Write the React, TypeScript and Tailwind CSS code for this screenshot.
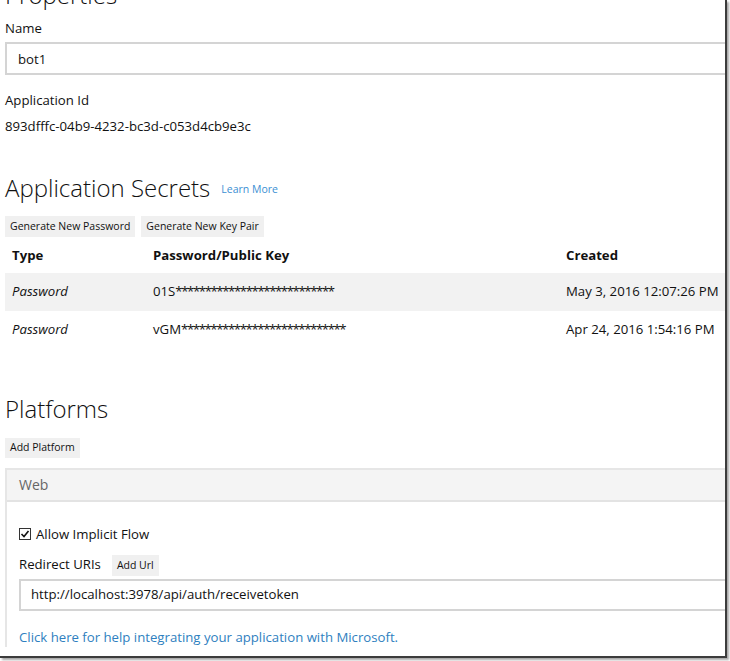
import React from "react";

const font = { fontFamily: '"Open Sans", "Noto Sans", sans-serif' };

function Check() {
  return (
    <span className="inline-flex h-[12px] w-[12px] items-center justify-center border border-[#333] bg-white">
      <svg width="10" height="10" viewBox="0 0 10 10">
        <path d="M1.5 5 L4 7.5 L8.5 2" fill="none" stroke="#111" strokeWidth="1.6" />
      </svg>
    </span>
  );
}

const rows = [
  { prefix: "01S", stars: 27, created: "May 3, 2016 12:07:26 PM", shaded: true },
  { prefix: "vGM", stars: 28, created: "Apr 24, 2016 1:54:16 PM", shaded: false },
];

export default function App() {
  return (
    <div className="relative h-[661px] w-[730px] overflow-hidden bg-white" style={font}>
      <div className="h-[658px] w-[727px] overflow-hidden border-r-2 border-b-2 border-[#3c3c3c] bg-white text-[13.2px] text-[#111] shadow-[2px_2px_2px_rgba(0,0,0,0.35)]">
        <h1 className="mt-[-20px] pl-[5px] text-[24px] font-light leading-[30px]">Properties</h1>

        <div className="mt-[8px] pl-[5px] leading-[20px]">Name</div>
        <div className="mt-[4px] ml-[5px] flex h-[33px] items-center border-2 border-r-0 border-[#d4d4d4] pl-[11px] pt-[2px]">bot1</div>

        <div className="mt-[15px] pl-[5px] leading-[20px]">Application Id</div>
        <div className="mt-[6px] pl-[5px] leading-[20px]">893dfffc-04b9-4232-bc3d-c053d4cb9e3c</div>

        <div className="mt-[35px] flex items-center gap-[11px] pl-[5px]">
          <h2 className="text-[24px] font-light leading-[34px]">Application Secrets</h2>
          <a className="pt-[3px] text-[10.5px] text-[#3b8fd3]">Learn More</a>
        </div>

        <div className="mt-[11px] flex gap-[6px] pl-[5px] text-[10.5px]">
          <button className="h-[21px] bg-[#f0f0f0] px-[5px]">Generate New Password</button>
          <button className="h-[21px] bg-[#f0f0f0] px-[5px]">Generate New Key Pair</button>
        </div>

        <div className="mt-[2px] ml-[5px]">
          <div className="grid h-[34px] grid-cols-[141px_413px_1fr] items-center pl-[7px] font-bold">
            <span>Type</span>
            <span>Password/Public Key</span>
            <span>Created</span>
          </div>
          {rows.map((r) => (
            <div
              key={r.prefix}
              className={`grid h-[38px] grid-cols-[141px_413px_1fr] items-center whitespace-nowrap pl-[7px] ${r.shaded ? "bg-[#f2f2f2]" : ""}`}
            >
              <span className="italic">Password</span>
              <span>
                {r.prefix}
                <span className="tracking-[-1.4px]">{"*".repeat(r.stars)}</span>
              </span>
              <span>{r.created}</span>
            </div>
          ))}
        </div>

        <h2 className="mt-[43px] pl-[5px] text-[24px] font-light leading-[34px]">Platforms</h2>

        <div className="mt-[11px] pl-[5px]">
          <button className="h-[20px] bg-[#f0f0f0] px-[5px] text-[10.5px]">Add Platform</button>
        </div>

        <div className="mt-[10px] ml-[5px] border-l-2 border-t-2 border-[#e6e6e6]">
          <div className="flex h-[32px] items-center border-b-2 border-[#e3e3e3] bg-[#f4f4f4] pl-[12px] text-[14px] text-[#666]">
            Web
          </div>
          <div className="pl-[12px] pt-[22px]">
            <label className="flex items-center gap-[5px] leading-[20px]">
              <Check />
              <span>Allow Implicit Flow</span>
            </label>
            <div className="mt-[11px] flex items-center gap-[11px]">
              <span>Redirect URIs</span>
              <button className="h-[21px] bg-[#f0f0f0] px-[5px] text-[10.5px]">Add Url</button>
            </div>
            <div className="mt-[3px] flex h-[32px] items-center border-2 border-r-0 border-[#d4d4d4] pl-[10px]">
              http://localhost:3978/api/auth/receivetoken
            </div>
            <a className="mt-[16px] block leading-[20px] text-[#2f7fc0]">
              Click here for help integrating your application with Microsoft.
            </a>
          </div>
        </div>
      </div>
    </div>
  );
}
